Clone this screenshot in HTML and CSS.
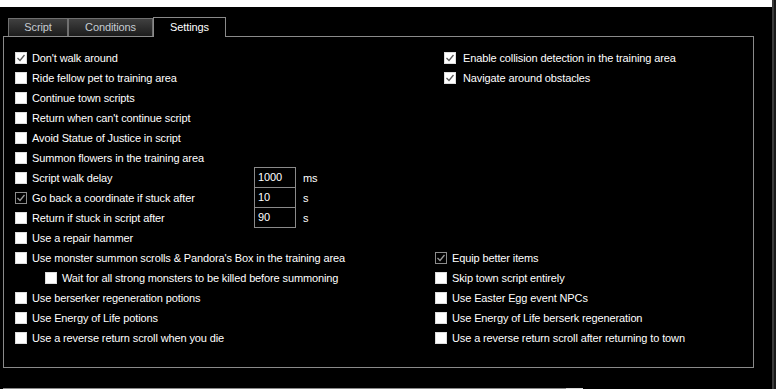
FILE: index.html
```html
<!DOCTYPE html>
<html>
<head>
<meta charset="utf-8">
<link rel="stylesheet" href="styles.css">
</head>
<body>
<div class="screen">
  <div class="left">
    <div class="topstrip"></div>
    <div class="tabs">
      <div class="tab t-script">Script</div>
      <div class="tab t-cond">Conditions</div>
      <div class="tab t-set active">Settings</div>
    </div>
    <div class="panel">
      <div class="row">
        <div class="l"><span class="cb on"><svg viewBox="0 0 10 10"><polyline points="1.5,5 4,7.5 8.5,2"/></svg></span><span>Don't walk around</span></div>
        <div class="r top"><span class="cb on"><svg viewBox="0 0 10 10"><polyline points="1.5,5 4,7.5 8.5,2"/></svg></span><span>Enable collision detection in the training area</span></div>
      </div>
      <div class="row">
        <div class="l"><span class="cb"></span><span>Ride fellow pet to training area</span></div>
        <div class="r top"><span class="cb on"><svg viewBox="0 0 10 10"><polyline points="1.5,5 4,7.5 8.5,2"/></svg></span><span>Navigate around obstacles</span></div>
      </div>
      <div class="row"><div class="l"><span class="cb"></span><span>Continue town scripts</span></div></div>
      <div class="row"><div class="l"><span class="cb"></span><span>Return when can't continue script</span></div></div>
      <div class="row"><div class="l"><span class="cb"></span><span>Avoid Statue of Justice in script</span></div></div>
      <div class="row"><div class="l"><span class="cb"></span><span>Summon flowers in the training area</span></div></div>
      <div class="row">
        <div class="l"><span class="cb"></span><span class="lbl">Script walk delay</span><span class="num">1000</span><span class="unit">ms</span></div>
      </div>
      <div class="row">
        <div class="l"><span class="cb dim"><svg viewBox="0 0 10 10"><polyline points="1.5,5 4,7.5 8.5,2"/></svg></span><span class="lbl">Go back a coordinate if stuck after</span><span class="num">10</span><span class="unit">s</span></div>
      </div>
      <div class="row">
        <div class="l"><span class="cb"></span><span class="lbl">Return if stuck in script after</span><span class="num">90</span><span class="unit">s</span></div>
      </div>
      <div class="row"><div class="l"><span class="cb"></span><span>Use a repair hammer</span></div></div>
      <div class="row">
        <div class="l"><span class="cb"></span><span>Use monster summon scrolls &amp; Pandora's Box in the training area</span></div>
        <div class="r"><span class="cb dim"><svg viewBox="0 0 10 10"><polyline points="1.5,5 4,7.5 8.5,2"/></svg></span><span>Equip better items</span></div>
      </div>
      <div class="row">
        <div class="l sub"><span class="cb"></span><span>Wait for all strong monsters to be killed before summoning</span></div>
        <div class="r"><span class="cb"></span><span>Skip town script entirely</span></div>
      </div>
      <div class="row">
        <div class="l"><span class="cb"></span><span>Use berserker regeneration potions</span></div>
        <div class="r"><span class="cb"></span><span>Use Easter Egg event NPCs</span></div>
      </div>
      <div class="row">
        <div class="l"><span class="cb"></span><span>Use Energy of Life potions</span></div>
        <div class="r"><span class="cb"></span><span>Use Energy of Life berserk regeneration</span></div>
      </div>
      <div class="row">
        <div class="l"><span class="cb"></span><span>Use a reverse return scroll when you die</span></div>
        <div class="r"><span class="cb"></span><span>Use a reverse return scroll after returning to town</span></div>
      </div>
    </div>
    <div class="bottombar"><div class="btn"></div></div>
  </div>
  <div class="vscroll"></div>
</div>
</body>
</html>
```

FILE: styles.css
```css
html, body {
  margin: 0;
  padding: 0;
  background: #000;
  overflow: hidden;
}
body {
  font-family: "Liberation Sans", Arial, sans-serif;
  font-size: 11px;
  letter-spacing: -0.12px;
  color: #fff;
}
.screen {
  display: flex;
  width: 776px;
  height: 389px;
  overflow: hidden;
}
.left {
  width: 772px;
  display: flex;
  flex-direction: column;
  flex: none;
}
.topstrip {
  height: 7px;
  background: #fff;
  flex: none;
}
.vscroll {
  width: 4px;
  flex: none;
  background: linear-gradient(to right, #3c3c3c 0 2px, #1a1a1a 2px);
}
.tabs {
  display: flex;
  align-items: flex-end;
  height: 19px;
  margin: 10px 0 0 8px;
  position: relative;
  z-index: 1;
  flex: none;
}
.tab {
  box-sizing: border-box;
  height: 18px;
  border: 1px solid #707070;
  border-bottom: none;
  background: linear-gradient(#404040, #1c1c1c);
  color: #c6ccd2;
  text-align: center;
  line-height: 17px;
}
.t-script { width: 60px; }
.t-cond { width: 85px; }
.t-set { width: 73px; }
.tab.active {
  height: 20px;
  margin-bottom: -1px;
  background: #000;
  color: #fff;
  border-color: #8a8a8a;
  line-height: 18px;
}
.panel {
  box-sizing: border-box;
  width: 751px;
  height: 332px;
  margin-left: 3px;
  border: 1px solid #8a8a8a;
  padding: 11px 0 0 11px;
  flex: none;
}
.row {
  display: flex;
  height: 20px;
  align-items: stretch;
}
.l {
  width: 420px;
  display: flex;
  align-items: center;
  flex: none;
  white-space: nowrap;
}
.l.sub {
  box-sizing: border-box;
  padding-left: 30px;
}
.r {
  display: flex;
  align-items: center;
  white-space: nowrap;
}
.r.top {
  padding-left: 9px;
}
.r.top .cb {
  margin-right: 7px;
}
.cb {
  box-sizing: border-box;
  width: 12px;
  height: 12px;
  background: #fff;
  border: 1px solid #dcdcdc;
  margin-right: 5px;
  flex: none;
  display: flex;
}
.cb svg {
  width: 10px;
  height: 10px;
  fill: none;
  stroke: #5a5a5a;
  stroke-width: 1.3;
}
.cb.dim {
  background: #000;
  border-color: #8c8c8c;
}
.cb.dim svg {
  stroke: #9a9a9a;
}
.lbl {
  width: 222px;
  flex: none;
}
.num {
  box-sizing: border-box;
  width: 42px;
  height: 21px;
  margin-top: -1px;
  align-self: flex-start;
  border: 1px solid #8a8a8a;
  padding-left: 3px;
  line-height: 19px;
}
.unit {
  margin-left: 7px;
}
.bottombar {
  width: 580px;
  height: 1px;
  margin: 20px 0 0 3px;
  background: #8a8a8a;
  display: flex;
  justify-content: flex-end;
  flex: none;
}
.btn {
  width: 17px;
  height: 1px;
  background: #d8d8d8;
}
```
